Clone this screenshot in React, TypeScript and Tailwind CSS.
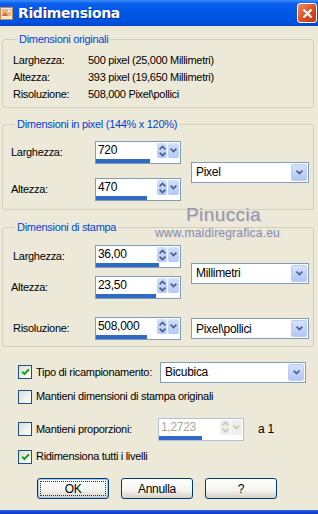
import React from 'react';

// small XP-style chevrons used by spin and combo buttons
const Chevron = ({ color = '#4D6185' }: { color?: string }) => (
  <svg width="7" height="5" viewBox="0 0 7 5">
    <path d="M0.6 0.6 L3.5 3.6 L6.4 0.6" fill="none" stroke={color} strokeWidth="1.7" />
  </svg>
);

const UpDown = ({ color = '#4D6185' }: { color?: string }) => (
  <svg width="7" height="12" viewBox="0 0 7 12">
    <path d="M0.6 4.4 L3.5 1.4 L6.4 4.4 M0.6 7.6 L3.5 10.6 L6.4 7.6" fill="none" stroke={color} strokeWidth="1.7" />
  </svg>
);

interface SpinProps {
  value: string;
  bar: number;
  disabled?: boolean;
}

function SpinBox({ value, bar, disabled = false }: SpinProps) {
  return (
    <div
      className={`w-[86px] h-[23px] border bg-white flex flex-col shrink-0 ${
        disabled ? 'border-[#AFC0D8]' : 'border-[#7F9DB9]'
      }`}
    >
      <div className="flex h-[17px]">
        <span
          className={`flex-1 pl-[2px] text-[12px] leading-[17px] ${
            disabled ? 'text-[#ACA899]' : 'text-black'
          }`}
        >
          {value}
        </span>
        <div className="flex gap-[1px] mr-[1px] pt-[1px]">
          <div
            className={`w-[10px] h-[15px] rounded-[2px] flex items-center justify-center ${
              disabled ? 'bg-[#EEEEEA]' : 'bg-[linear-gradient(to_bottom,#D3E0FD,#B5C9F7)]'
            }`}
          >
            <UpDown color={disabled ? '#C9C7BA' : '#4D6185'} />
          </div>
          <div
            className={`w-[11px] h-[15px] rounded-[2px] flex items-center justify-center ${
              disabled ? 'bg-[#EEEEEA]' : 'bg-[linear-gradient(to_bottom,#D3E0FD,#B5C9F7)]'
            }`}
          >
            <Chevron color={disabled ? '#C9C7BA' : '#4D6185'} />
          </div>
        </div>
      </div>
      <div className="h-[4px] bg-[#316AC5]" style={{ width: bar }} />
    </div>
  );
}

function Combo({ value, className = '' }: { value: string; className?: string }) {
  return (
    <div className={`h-[21px] border border-[#7F9DB9] bg-white flex items-center shrink-0 ${className}`}>
      <span className="flex-1 pl-[4px] text-[12px]">{value}</span>
      <div className="w-[16px] h-[17px] mr-[1px] rounded-[2px] border border-[#BACDF5] bg-[linear-gradient(to_bottom,#D6E2FD,#B2C6F5)] flex items-center justify-center">
        <Chevron />
      </div>
    </div>
  );
}

function Check({ checked }: { checked?: boolean }) {
  return (
    <div className="w-[14px] h-[14px] border border-[#1C5180] bg-[linear-gradient(135deg,#DCDCD5,#FFFFFF)] flex items-center justify-center shrink-0">
      {checked && (
        <svg width="9" height="8" viewBox="0 0 9 8">
          <path d="M1 3.6 L3.4 6 L8 1.2" fill="none" stroke="#21A121" strokeWidth="2" />
        </svg>
      )}
    </div>
  );
}

function Btn({ label, isDefault }: { label: string; isDefault?: boolean }) {
  return (
    <div
      className={`w-[72px] h-[21px] rounded-[3px] border border-[#003C74] bg-[linear-gradient(to_bottom,#FFFFFF,#F3F3EF_60%,#D6D0C5)] flex items-center justify-center text-[12px] ${
        isDefault ? 'p-[2px] shadow-[inset_0_0_0_1px_#A8C4F0]' : ''
      }`}
    >
      {isDefault ? (
        <div className="w-full h-full border border-dotted border-[#333] flex items-center justify-center">
          {label}
        </div>
      ) : (
        label
      )}
    </div>
  );
}

const legendCls = 'ml-[4px] px-[2px] text-[#0046D5] leading-[13px]';
const groupCls = 'border border-[#D0D0BF] rounded-[3px] ml-[2px] mr-[4px]';

export default function App() {
  return (
    <div className="w-[318px] h-[514px] flex flex-col bg-[#ECE9D8] relative overflow-hidden text-black text-[11px] tracking-[-0.3px] font-['Liberation_Sans',Arial,sans-serif]">
      {/* Title bar */}
      <div className="h-[26px] shrink-0 flex items-center bg-[linear-gradient(to_bottom,#3C8EFC_0%,#0A5FEB_14%,#0056E6_50%,#0052DF_85%,#0041C9_100%)]">
        <svg width="13" height="13" viewBox="0 0 13 13" className="ml-[0px]">
          <rect x="0.5" y="0.5" width="12" height="12" fill="#F3E6D0" stroke="#B68E5C" />
          <rect x="2" y="2" width="9" height="7" fill="#E9B489" />
          <path d="M2 9 L5 5 L8 9 Z" fill="#C76A3C" />
          <circle cx="9" cy="4" r="1.2" fill="#FFF4C4" />
        </svg>
        <span className="ml-[5px] text-white font-bold text-[14px] tracking-[-0.4px] font-['DejaVu_Sans',sans-serif] [text-shadow:1px_1px_#0A2A8C]">
          Ridimensiona
        </span>
        <div className="ml-auto mr-[1px] w-[20px] h-[20px] rounded-[3px] border border-white bg-[linear-gradient(135deg,#F08A64,#D9481F_60%,#C43A14)] flex items-center justify-center">
          <svg width="11" height="11" viewBox="0 0 11 11">
            <path d="M1.5 1.5 L9.5 9.5 M9.5 1.5 L1.5 9.5" stroke="white" strokeWidth="2.2" />
          </svg>
        </div>
      </div>

      {/* Body */}
      <div className="flex-1 flex flex-col">
        {/* Dimensioni originali */}
        <fieldset className={`${groupCls} mt-[7px] pl-[10px] pt-[6px] pb-[4px]`}>
          <legend className={legendCls}>Dimensioni originali</legend>
          {[
            ['Larghezza:', '500 pixel (25,000 Millimetri)'],
            ['Altezza:', '393 pixel (19,650 Millimetri)'],
            ['Risoluzione:', '508,000 Pixel\\pollici'],
          ].map(([k, v]) => (
            <div key={k} className="flex h-[17px] items-center">
              <span className="w-[75px]">{k}</span>
              <span>{v}</span>
            </div>
          ))}
        </fieldset>

        {/* Dimensioni in pixel */}
        <fieldset className={`${groupCls} mt-[10px] pl-[8px] pt-[10px] pb-[8px]`}>
          <legend className={legendCls}>Dimensioni in pixel (144% x 120%)</legend>
          <div className="flex items-center gap-[10px]">
            <div className="flex flex-col gap-[14px]">
              <div className="flex items-center">
                <span className="w-[84px]">Larghezza:</span>
                <SpinBox value="720" bar={54} />
              </div>
              <div className="flex items-center">
                <span className="w-[84px]">Altezza:</span>
                <SpinBox value="470" bar={51} />
              </div>
            </div>
            <Combo value="Pixel" className="w-[118px] mt-[2px]" />
          </div>
        </fieldset>

        {/* Dimensioni di stampa */}
        <fieldset className={`${groupCls} mt-[11px] pl-[8px] pt-[11px] pb-[6px]`}>
          <legend className={legendCls}>Dimensioni di stampa</legend>
          <div className="flex items-center gap-[10px]">
            <div className="flex flex-col gap-[8px]">
              <div className="flex items-center">
                <span className="w-[84px] pl-[2px]">Larghezza:</span>
                <SpinBox value="36,00" bar={63} />
              </div>
              <div className="flex items-center">
                <span className="w-[84px]">Altezza:</span>
                <SpinBox value="23,50" bar={60} />
              </div>
            </div>
            <Combo value="Millimetri" className="w-[118px] mt-[2px]" />
          </div>
          <div className="flex items-center gap-[10px] mt-[18px]">
            <div className="flex items-center">
              <span className="w-[84px] pl-[2px]">Risoluzione:</span>
              <SpinBox value="508,000" bar={51} />
            </div>
            <Combo value="Pixel\pollici" className="w-[118px]" />
          </div>
        </fieldset>

        {/* Options */}
        <div className="flex items-center h-[22px] mt-[14px] pl-[18px]">
          <Check checked />
          <span className="ml-[4px] w-[124px]">Tipo di ricampionamento:</span>
          <Combo value="Bicubica" className="w-[146px]" />
        </div>
        <div className="flex items-center h-[15px] mt-[6px] pl-[18px]">
          <Check />
          <span className="ml-[4px]">Mantieni dimensioni di stampa originali</span>
        </div>
        <div className="flex items-center h-[24px] mt-[13px] pl-[18px]">
          <Check />
          <span className="ml-[4px] w-[122px]">Mantieni proporzioni:</span>
          <SpinBox value="1,2723" bar={43} disabled />
          <span className="ml-[14px] text-[12px]">a 1</span>
        </div>
        <div className="flex items-center h-[15px] mt-[8px] pl-[18px]">
          <Check checked />
          <span className="ml-[4px]">Ridimensiona tutti i livelli</span>
        </div>

        {/* Buttons */}
        <div className="flex gap-[12px] mt-[14px] pl-[37px]">
          <Btn label="OK" isDefault />
          <Btn label="Annulla" />
          <Btn label="?" />
        </div>
      </div>

      {/* Bottom window frame */}
      <div className="h-[4px] shrink-0 bg-[linear-gradient(to_bottom,#2C63E0,#0831C8)]" />

      {/* Watermark over the dialog */}
      <div className="absolute left-[186px] top-[201px] text-[19px] tracking-[0.4px] text-[#9595A6] [text-shadow:1px_1px_#D8D8E0] pointer-events-none">
        Pinuccia
      </div>
      <div className="absolute left-[155px] top-[224px] text-[12px] tracking-[0.2px] text-[#8A8DA6] [text-shadow:1px_1px_#E0E0E6] pointer-events-none">
        www.maidiregrafica.eu
      </div>
    </div>
  );
}
